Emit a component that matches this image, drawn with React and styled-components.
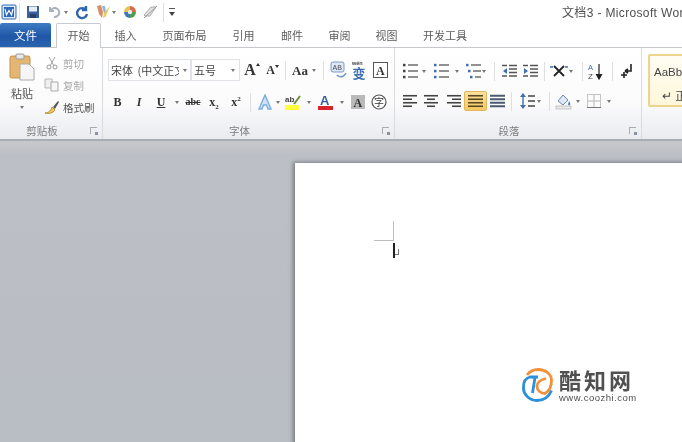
import React from "react";
import styled, { createGlobalStyle } from "styled-components";

const Global = createGlobalStyle`
  html, body { margin: 0; padding: 0; background: #babdc3; }
  #root { width: 682px; height: 442px; overflow: hidden; }
`;

const Window = styled.div`
  width: 682px;
  height: 442px;
  display: flex;
  flex-direction: column;
  overflow: hidden;
  background: #fff;
  font-family: "Noto Sans CJK SC", "Liberation Sans", sans-serif;
  color: #555;
  filter: blur(0.4px);
`;

const TitleBar = styled.div`
  height: 24px;
  flex: none;
  display: flex;
  align-items: center;
  background: #fff;
  white-space: nowrap;
`;

const QuickSlot = styled.div`
  width: ${p => p.$w}px;
  height: 24px;
  flex: none;
  display: flex;
  align-items: center;
  justify-content: center;
  svg { flex: none; }
`;

const DocTitle = styled.div`
  margin-left: auto;
  width: 120px;
  flex: none;
  overflow: hidden;
  padding-bottom: 1px;
  font-size: 12px;
  letter-spacing: 0.35px;
  color: #4e4e4e;
  font-family: "Liberation Sans", "Noto Sans CJK SC", sans-serif;
`;

const TabBar = styled.div`
  height: 24px;
  flex: none;
  display: flex;
  align-items: stretch;
  background: #fff;
  border-bottom: 1px solid #c5c8cd;
  box-sizing: border-box;
`;

const FileTab = styled.div`
  width: 51px;
  flex: none;
  margin: -1px 5px 0 0;
  display: flex;
  align-items: center;
  justify-content: center;
  color: #fff;
  font-size: 11.5px;
  border-radius: 2px 2px 0 0;
  background: linear-gradient(#3f7cc4, #1f57a6 55%, #2a63b0);
`;

const Tab = styled.div`
  width: ${p => p.$w}px;
  flex: none;
  display: flex;
  align-items: center;
  justify-content: center;
  font-size: 11px;
  color: #5c5c5c;
  padding-bottom: 2px;
  box-sizing: border-box;
  ${p => p.$active && `
    background: #fff;
    border: 1px solid #c8ccd2;
    border-bottom: none;
    border-radius: 2px 2px 0 0;
    height: 25px;
    margin-top: -1px;
  `}
`;

const Ribbon = styled.div`
  height: 93px;
  flex: none;
  display: flex;
  box-sizing: border-box;
  background: linear-gradient(#ffffff, #fbfbfc 60%, #e9ebef);
  border-bottom: 2px solid #a8acb3;
`;

const Group = styled.div`
  width: ${p => p.$w}px;
  flex: none;
  display: flex;
  flex-direction: column;
  box-sizing: border-box;
  border-right: 1px solid #d9dbdf;
  position: relative;
`;

const GroupBody = styled.div`
  height: 74px;
  flex: none;
  box-sizing: border-box;
  padding-top: ${p => p.$top || 0}px;
`;

const GroupLabel = styled.div`
  height: 17px;
  display: flex;
  align-items: center;
  justify-content: center;
  padding-right: 18px;
  font-size: 10.5px;
  color: #7c7c7c;
`;

const Launcher = styled.div`
  position: absolute;
  right: 5px;
  bottom: 5px;
  width: 6px;
  height: 6px;
  border-left: 1px solid #aaa;
  border-top: 1px solid #aaa;
  &::after {
    content: "";
    position: absolute;
    right: -1px;
    bottom: -1px;
    width: 3px;
    height: 3px;
    background: #8a93a3;
  }
`;

const ClipBody = styled(GroupBody)`
  display: flex;
`;

const PasteColumn = styled.div`
  width: 44px;
  flex: none;
  display: flex;
  flex-direction: column;
  align-items: center;
  padding-top: 5px;
  font-size: 11px;
  color: #555;
`;

const PasteLabel = styled.div`
  margin: 5px 0 -3px;
  line-height: 14px;
`;

const ClipColumn = styled.div`
  flex: 1;
  padding-top: 5px;
  display: flex;
  flex-direction: column;
  gap: 2px;
`;

const ClipRow = styled.div`
  height: 20px;
  display: flex;
  align-items: center;
  gap: 3px;
  font-size: 10.5px;
  color: ${p => (p.$dim ? "#a9a9a9" : "#555")};
  white-space: nowrap;
  svg { width: 16px; flex: none; }
`;

const Row = styled.div`
  display: flex;
  align-items: center;
  height: 22px;
  margin-left: ${p => p.$left || 0}px;
  margin-bottom: ${p => p.$gap || 0}px;
`;

const Cell = styled.div`
  width: ${p => p.$w}px;
  height: 20px;
  flex: none;
  margin-left: ${p => p.$ml || 0}px;
  display: flex;
  align-items: center;
  justify-content: center;
  box-sizing: border-box;
  svg { flex: none; }
  ${p => p.$active && `
    background: linear-gradient(#fbe3a0, #f6c862);
    border: 1px solid #e2b659;
    border-radius: 2px;
  `}
`;

const Divider = styled.div`
  width: 1px;
  height: 19px;
  flex: none;
  margin: 0 ${p => p.$r ?? p.$m ?? 5}px 0 ${p => p.$m ?? 5}px;
  background: #dcdee2;
`;

const Arrow = styled.div`
  width: ${p => p.$w || 9}px;
  height: 20px;
  flex: none;
  margin-left: ${p => p.$ml || 0}px;
  display: flex;
  align-items: center;
  justify-content: center;
  &::before {
    content: "";
    flex: none;
    border-left: 2.5px solid transparent;
    border-right: 2.5px solid transparent;
    border-top: 3px solid #777;
  }
`;

const Combo = styled.div`
  width: ${p => p.$w}px;
  height: 22px;
  flex: none;
  box-sizing: border-box;
  display: flex;
  align-items: center;
  padding-left: 2px;
  background: #fff;
  border: 1px solid #dfe2e6;
  margin-right: ${p => p.$mr || 0}px;
  font-size: 11px;
  color: #444;
`;

const ComboText = styled.span`
  flex: 1;
  overflow: hidden;
  white-space: nowrap;
  word-spacing: 2px;
`;

const GlyphA = styled.span`
  font-family: "Liberation Serif", serif;
  font-weight: bold;
  font-size: ${p => p.$size || 13}px;
  color: ${p => p.$color || "#333"};
  font-style: ${p => (p.$italic ? "italic" : "normal")};
  text-decoration: ${p => p.$deco || "none"};
  line-height: 1;
`;

const RaisedA = styled(GlyphA)`
  position: relative;
  &::after {
    content: "";
    position: absolute;
    right: -4px;
    top: 1px;
    border-left: 2.5px solid transparent;
    border-right: 2.5px solid transparent;
    ${p => (p.$down ? "border-top: 3px solid #333;" : "border-bottom: 3px solid #333;")}
  }
`;

const Sub = styled.sub`
  font-size: 7px;
  line-height: 0;
`;

const Sup = styled.sup`
  font-size: 7px;
  line-height: 0;
`;

const StyleCard = styled.div`
  width: 50px;
  height: 53px;
  margin: 6px 0 0 6px;
  flex: none;
  box-sizing: border-box;
  border: 2px solid #eed58f;
  border-radius: 2px;
  background: linear-gradient(#fffdf3, #fff7db);
  padding: 9px 0 0 4px;
  font-size: 11.5px;
  line-height: 14px;
  color: #444;
  white-space: nowrap;
  font-family: "Liberation Sans", "Noto Sans CJK SC", sans-serif;
`;

const StyleSample = styled.div`
  margin: 10px 0 0 8px;
`;

const Workspace = styled.div`
  flex: 1;
  min-height: 0;
  position: relative;
  background: linear-gradient(#c6c8cc, #bcbfc5 14px, #b9bdc4);
  padding: 22px 0 0 295px;
`;

const Page = styled.div`
  width: 420px;
  height: 320px;
  box-sizing: border-box;
  background: #fff;
  box-shadow: -2px -1px 4px rgba(80, 80, 85, 0.6);
  padding: 58px 0 0 79px;
`;

const CropMark = styled.div`
  width: 20px;
  height: 20px;
  box-sizing: border-box;
  border-right: 1px solid #bdbdbd;
  border-bottom: 1px solid #bdbdbd;
`;

const Caret = styled.div`
  width: 2px;
  height: 15px;
  margin: 2px 0 0 19px;
  background: #222;
  position: relative;
  &::after {
    content: "";
    position: absolute;
    left: 2px;
    top: 6px;
    width: 3px;
    height: 5px;
    border-right: 1px solid #777;
    border-bottom: 1px solid #777;
  }
`;

const Watermark = styled.div`
  position: absolute;
  left: 522px;
  top: 225px;
  display: flex;
  align-items: center;
  gap: 6px;
`;

const BrandText = styled.div`
  display: flex;
  flex-direction: column;
  color: #505050;
  padding-top: 2px;
`;

const BrandName = styled.div`
  font-size: 22px;
  line-height: 23px;
  font-weight: 700;
  letter-spacing: 3px;
  margin-bottom: 2px;
`;

const BrandUrl = styled.div`
  font-size: 9.5px;
  line-height: 10px;
  letter-spacing: 0.5px;
  font-family: "Liberation Sans", sans-serif;
`;

// ---- drawings ----

const Svg = ({ w = 16, h = 16, children }) => (
  <svg width={w} height={h} viewBox={`0 0 ${w} ${h}`} fill="none">{children}</svg>
);

const WordIcon = () => (
  <Svg>
    <rect x="1" y="1" width="14" height="14" rx="1" fill="#dbe8f7" stroke="#2f6db5" />
    <rect x="3" y="3" width="10" height="10" fill="#2b67b4" />
    <path d="M4 5l1.5 6L8 6.5 10.5 11 12 5" stroke="#fff" strokeWidth="1.2" />
  </Svg>
);

const SaveIcon = () => (
  <Svg>
    <rect x="2" y="2" width="12" height="12" fill="#3a5f9e" />
    <rect x="4" y="2.5" width="8" height="5" fill="#e8eef6" />
    <rect x="5" y="10" width="6" height="4" fill="#2a3f66" />
  </Svg>
);

const UndoIcon = () => (
  <Svg>
    <path d="M4 3v4h4M4.5 7A4.5 4.5 0 1 1 8 13" stroke="#a9b0bb" strokeWidth="2" />
  </Svg>
);

const RedoIcon = () => (
  <Svg>
    <path d="M12 2v4H8M12 6a5 5 0 1 0 1 4" stroke="#2f67ae" strokeWidth="2.4" />
  </Svg>
);

const BrushIcon = () => (
  <Svg>
    <path d="M2 2l2 8 3 4 1-6-2-7z" fill="#d98c6a" />
    <path d="M7 2l2 7 1 5 1-6-1-6z" fill="#8cb4df" />
    <path d="M15 2L9 9l-1 5 3-2z" fill="#e5cf5c" />
  </Svg>
);

const WheelIcon = () => (
  <svg width="14" height="14" viewBox="0 0 14 14">
    <path d="M7 7V1a6 6 0 0 1 6 6z" fill="#d86a4a" />
    <path d="M7 7h6a6 6 0 0 1-6 6z" fill="#4ba04f" />
    <path d="M7 7v6a6 6 0 0 1-6-6z" fill="#3f78c0" />
    <path d="M7 7H1a6 6 0 0 1 6-6z" fill="#e3c54c" />
    <circle cx="7" cy="7" r="2.2" fill="#eee" />
  </svg>
);

const EraseIcon = () => (
  <Svg>
    <path d="M2 11l7-8h5l-6 9H3z" fill="#e4e4e4" stroke="#aaa" />
    <path d="M2 14L15 2" stroke="#999" />
  </Svg>
);

const CustomizeIcon = () => (
  <Svg w={8} h={10}>
    <path d="M1 1.5h6" stroke="#555" />
    <path d="M1 5h6L4 9z" fill="#444" />
  </Svg>
);

const PasteIcon = () => (
  <svg width="26" height="28" viewBox="0 0 26 28" fill="none">
    <rect x="1" y="3" width="20" height="22" rx="2" fill="#e5b66f" stroke="#c2914c" />
    <rect x="7" y="1" width="8" height="5" rx="1" fill="#e8e8e8" stroke="#999" />
    <path d="M11 11h9l5 5v11H11z" fill="#f6f6f6" stroke="#aaa" />
  </svg>
);

const ScissorsIcon = () => (
  <svg width="16" height="14" viewBox="-2 0 16 14" fill="none">
    <path d="M3 1l5 9M9 1L4 10" stroke="#a3a3a3" />
    <circle cx="3" cy="11" r="2" stroke="#9a9a9a" />
    <circle cx="9" cy="11" r="2" stroke="#9a9a9a" />
  </svg>
);

const CopyIcon = () => (
  <Svg w={16} h={14}>
    <path d="M1 1h7v9H1z" fill="#eee" stroke="#b5b5b5" />
    <path d="M7 4h7v9H7z" fill="#f6f6f6" stroke="#aaa" />
  </Svg>
);

const PainterIcon = () => (
  <Svg w={16} h={16}>
    <path d="M1 14c4 0 6-3 7-6l3 3c-2 3-6 4-10 3z" fill="#ecc660" stroke="#b98f2e" />
    <path d="M9 8l5-6 1 1-4 7z" fill="#555" />
  </Svg>
);

const AbcCheck = () => (
  <Svg w={18} h={18}>
    <rect x="1" y="1" width="13" height="10" rx="2" fill="#dfe9f5" stroke="#7a9bc4" />
    <text x="2.5" y="9" fontSize="7" fill="#445" fontFamily="Liberation Sans">AB</text>
    <path d="M7 14c3 3 7 2 9-2" stroke="#6f97c9" strokeWidth="1.6" />
  </Svg>
);

const PhoneticIcon = () => (
  <svg width="18" height="20" viewBox="0 0 18 20">
    <text x="2" y="5" fontSize="5.500" fontWeight="bold" fill="#444" fontFamily="Liberation Sans">wén</text>
    <text x="2.500" y="18" fontSize="13" fontWeight="bold" fill="#3f6fb0" fontFamily="Noto Sans CJK SC">变</text>
  </svg>
);

const BoxA = () => (
  <svg width="15" height="16" viewBox="0 0 15 16">
    <rect x=".5" y=".5" width="14" height="15" fill="#fff" stroke="#555" />
    <text x="3" y="13" fontSize="12" fontWeight="bold" fill="#333" fontFamily="Liberation Serif">A</text>
  </svg>
);

const GlowA = () => (
  <svg width="16" height="16" viewBox="0 0 16 16">
    <path d="M8 1L2 15h3l1.500-4h3l1.500 4h3z" fill="#cfe2f6" stroke="#78aee0" strokeWidth="1.4" />
  </svg>
);

const HighlightIcon = () => (
  <svg width="18" height="18" viewBox="0 0 18 18">
    <text x="1" y="9" fontSize="8" fontWeight="bold" fill="#444" fontFamily="Liberation Sans">ab</text>
    <path d="M10 11l6-8" stroke="#6d8f3a" strokeWidth="2" />
    <rect x="1" y="12" width="14" height="5" fill="#ffff3c" />
  </svg>
);

const ColorA = () => (
  <svg width="16" height="17" viewBox="0 0 16 17">
    <text x="2" y="11" fontSize="13" fontWeight="bold" fill="#3a5f9e" fontFamily="Liberation Sans">A</text>
    <rect x="0" y="12" width="15" height="4" fill="#d8232a" />
  </svg>
);

const ShadedA = () => (
  <svg width="14" height="14" viewBox="0 0 14 14">
    <rect width="14" height="14" fill="#b9b9b9" />
    <text x="2.5" y="11.5" fontSize="12" fontWeight="bold" fill="#333" fontFamily="Liberation Serif">A</text>
  </svg>
);

const CircleChar = () => (
  <svg width="16" height="16" viewBox="0 0 16 16">
    <circle cx="8" cy="8" r="7" stroke="#555" strokeWidth="1.2" fill="#fff" />
    <text x="3" y="12" fontSize="10" fill="#333" fontFamily="Noto Sans CJK SC">字</text>
  </svg>
);

const Lines = ({ rows, w = 15, h = 14, color = "#444", sw = 1.6 }) => (
  <svg width={w} height={h} viewBox={`0 0 ${w} ${h}`}>
    {rows.map(([x1, x2], i) => (
      <path key={i} d={`M${x1} ${(i + 0.5) * h / rows.length}H${x2}`} stroke={color} strokeWidth={sw} />
    ))}
  </svg>
);

const ListIcon = ({ marker = "#444", tiered }) => (
  <svg width="15" height="16" viewBox="0 0 15 16">
    {[2, 8, 14].map((y, i) => (
      <g key={y}>
        <rect x={tiered ? i * 2 : 0} y={y - 1.2} width="2.5" height="2.5" fill={marker} />
        <path d={`M${(tiered ? i * 2 : 0) + 5} ${y}H15`} stroke="#555" strokeWidth="1.3" />
      </g>
    ))}
  </svg>
);

const IndentIcon = ({ dir }) => (
  <svg width="15" height="14" viewBox="0 0 15 14">
    <path d="M7 1.5h8M7 5h8M7 8.5h8M7 12h8" stroke="#555" strokeWidth="1.3" />
    <path d={dir < 0 ? "M5 4L1 7l4 3z" : "M1 4l4 3-4 3z"} fill="#3f6fb0" />
    <path d="M0 1.5h5M0 12h5" stroke="#555" strokeWidth="1.3" />
  </svg>
);

const XIcon = () => (
  <svg width="18" height="14" viewBox="0 0 18 14">
    <path d="M4 2l10 10M14 2L4 12" stroke="#222" strokeWidth="1.8" />
    <path d="M0 3h3M15 3h3" stroke="#3f6fb0" strokeWidth="1.5" />
  </svg>
);

const SortIcon = () => (
  <svg width="16" height="17" viewBox="0 0 16 17">
    <text x="0" y="7" fontSize="7.5" fill="#3f6fb0" fontFamily="Liberation Sans">A</text>
    <text x="0" y="16" fontSize="8" fill="#444" fontFamily="Liberation Sans">Z</text>
    <path d="M11 1v14M8.5 11.5L11 16l2.500-4.500z" stroke="#222" strokeWidth="1.2" fill="#222" />
  </svg>
);

const PilcrowIcon = () => (
  <svg width="14" height="16" viewBox="0 0 14 16">
    <path d="M11 1v7H5M5 8l3-2M5 8l3 2" stroke="#222" strokeWidth="1.6" fill="none" />
    <path d="M4 9v6M1 12h6" stroke="#222" strokeWidth="1.6" />
  </svg>
);

const LineSpacing = () => (
  <svg width="15" height="18" viewBox="0 0 15 18">
    <path d="M3 3v12" stroke="#3f6fb0" strokeWidth="1.4" />
    <path d="M0 5l3-4 3 4zM0 13l3 4 3-4z" fill="#3f6fb0" />
    <path d="M8 4h7M8 9h7M8 14h7" stroke="#444" strokeWidth="1.5" />
  </svg>
);

const ShadingIcon = () => (
  <svg width="18" height="18" viewBox="0 0 18 18">
    <path d="M3 9l5-6 5 5-5 5z" fill="#dfe9f5" stroke="#6f88a8" />
    <path d="M14 9c1 2 2 3 1 4s-2 0-2-1z" fill="#4f86c6" />
    <rect x="1" y="14" width="15" height="3" fill="#e9e9e9" stroke="#aaa" strokeWidth=".6" />
  </svg>
);

const BorderIcon = () => (
  <svg width="14" height="14" viewBox="0 0 14 14">
    <rect x=".5" y=".5" width="13" height="13" fill="#fbfbfb" stroke="#c4c4c4" />
    <path d="M7 1v12M1 7h12" stroke="#b5b5b5" />
    <path d="M0 13.5h14" stroke="#777" />
  </svg>
);

const LogoMark = () => (
  <svg width="31" height="34" viewBox="0 0 31 34" fill="none">
    <path d="M1.500 19C1 26 7 32.500 15 32.500c7 0 12-4 14.500-10" stroke="#2c8fd8" strokeWidth="2.8" />
    <path d="M1.500 19C1.500 14 4 10 8 9h8M13 9.500L10.500 25" stroke="#2c8fd8" strokeWidth="2.8" />
    <path d="M5 7C8 3 12 1.500 16 1.500c8 0 13.500 5 13.500 11 0 6-3 11-6.500 13-4 0-8-3-8-7s4-7 9-8" stroke="#f0913a" strokeWidth="2.8" />
  </svg>
);

// ---- data ----

const TABS = [
  ["开始", 45, true],
  ["插入", 49],
  ["页面布局", 69],
  ["引用", 49],
  ["邮件", 48],
  ["审阅", 47],
  ["视图", 47],
  ["开发工具", 70],
];

const App = () => (
  <Window>
    <Global />
    <TitleBar>
      <QuickSlot $w={17}><WordIcon /></QuickSlot>
      <QuickSlot $w={4}><Divider $m={0} /></QuickSlot>
      <QuickSlot $w={24}><SaveIcon /></QuickSlot>
      <QuickSlot $w={18}><UndoIcon /></QuickSlot>
      <Arrow $w={6} />
      <QuickSlot $w={26}><RedoIcon /></QuickSlot>
      <QuickSlot $w={16}><BrushIcon /></QuickSlot>
      <Arrow $w={6} />
      <QuickSlot $w={25}><WheelIcon /></QuickSlot>
      <QuickSlot $w={16}><EraseIcon /></QuickSlot>
      <QuickSlot $w={11}><Divider $m={0} /></QuickSlot>
      <QuickSlot $w={6}><CustomizeIcon /></QuickSlot>
      <DocTitle>文档3 - Microsoft Word</DocTitle>
    </TitleBar>

    <TabBar>
      <FileTab>文件</FileTab>
      {TABS.map(([label, w, active]) => (
        <Tab key={label} $w={w} $active={active}>{label}</Tab>
      ))}
    </TabBar>

    <Ribbon>
      <Group $w={103}>
        <ClipBody>
          <PasteColumn>
            <PasteIcon />
            <PasteLabel>粘贴</PasteLabel>
            <Arrow $w={9} />
          </PasteColumn>
          <ClipColumn>
            <ClipRow $dim><ScissorsIcon />剪切</ClipRow>
            <ClipRow $dim><CopyIcon />复制</ClipRow>
            <ClipRow><PainterIcon />格式刷</ClipRow>
          </ClipColumn>
        </ClipBody>
        <GroupLabel>剪贴板</GroupLabel>
        <Launcher />
      </Group>

      <Group $w={292}>
        <GroupBody $top={11}>
          <Row $left={5} $gap={10}>
            <Combo $w={83}>
              <ComboText>宋体 (中文正文</ComboText>
              <Arrow $w={11} />
            </Combo>
            <Combo $w={49}>
              <ComboText>五号</ComboText>
              <Arrow $w={12} />
            </Combo>
            <Cell $w={20}><RaisedA $size={16}>A</RaisedA></Cell>
            <Cell $w={21}><RaisedA $size={12} $down>A</RaisedA></Cell>
            <Divider $m={4} />
            <Cell $w={20}><GlyphA $size={13}>Aa</GlyphA></Cell>
            <Arrow $w={8} />
            <Divider $m={5} />
            <Cell $w={19}><AbcCheck /></Cell>
            <Cell $w={22}><PhoneticIcon /></Cell>
            <Cell $w={21}><BoxA /></Cell>
          </Row>
          <Row $left={4}>
            <Cell $w={21}><GlyphA $size={12}>B</GlyphA></Cell>
            <Cell $w={22}><GlyphA $size={12} $italic>I</GlyphA></Cell>
            <Cell $w={22}><GlyphA $size={12} $deco="underline">U</GlyphA></Cell>
            <Arrow $w={10} />
            <Cell $w={22}><GlyphA $size={10} $deco="line-through">abc</GlyphA></Cell>
            <Cell $w={20}><GlyphA $size={12}>x<Sub>2</Sub></GlyphA></Cell>
            <Cell $w={24}><GlyphA $size={12}>x<Sup>2</Sup></GlyphA></Cell>
            <Divider $m={2} $r={6} />
            <Cell $w={16}><GlowA /></Cell>
            <Arrow $w={9} />
            <Cell $w={22}><HighlightIcon /></Cell>
            <Arrow $w={9} />
            <Cell $w={26}><ColorA /></Cell>
            <Arrow $w={5} />
            <Cell $w={28}><ShadedA /></Cell>
            <Cell $w={14}><CircleChar /></Cell>
          </Row>
        </GroupBody>
        <GroupLabel>字体</GroupLabel>
        <Launcher />
      </Group>

      <Group $w={247}>
        <GroupBody $top={12}>
          <Row $left={5} $gap={8}>
            <Cell $w={20}><ListIcon /></Cell>
            <Arrow $w={8} />
            <Cell $w={26}><ListIcon marker="#3f6fb0" /></Cell>
            <Arrow $w={6} />
            <Cell $ml={5} $w={16}><ListIcon tiered marker="#3f6fb0" /></Cell>
            <Arrow $w={6} />
            <Divider $m={7} />
            <Cell $w={14}><IndentIcon dir={-1} /></Cell>
            <Cell $ml={7} $w={14}><IndentIcon dir={1} /></Cell>
            <Divider $m={7} />
            <Cell $w={14}><XIcon /></Cell>
            <Arrow $w={10} />
            <Divider $m={6} />
            <Cell $w={14}><SortIcon /></Cell>
            <Divider $m={9} />
            <Cell $w={10}><PilcrowIcon /></Cell>
          </Row>
          <Row $left={5}>
            <Cell $w={20}><Lines rows={[[0, 14], [0, 9], [0, 14], [0, 9]]} /></Cell>
            <Cell $w={22}><Lines rows={[[0, 14], [3, 11], [0, 14], [3, 11]]} /></Cell>
            <Cell $w={22}><Lines rows={[[1, 15], [6, 15], [1, 15], [6, 15]]} /></Cell>
            <Cell $w={23} $active><Lines rows={[[0, 15], [0, 15], [0, 15], [0, 15]]} color="#5a4a20" /></Cell>
            <Cell $w={20}><Lines rows={[[0, 15], [0, 15], [0, 15], [0, 15]]} color="#4a5a70" sw={2} /></Cell>
            <Divider $m={4} />
            <Cell $ml={1} $w={20}><LineSpacing /></Cell>
            <Arrow $w={4} />
            <Divider $m={8} />
            <Cell $w={12}><ShadingIcon /></Cell>
            <Arrow $ml={4} $w={8} />
            <Cell $ml={5} $w={14}><BorderIcon /></Cell>
            <Arrow $ml={3} $w={9} />
          </Row>
        </GroupBody>
        <GroupLabel>段落</GroupLabel>
        <Launcher />
      </Group>

      <StyleCard>
        AaBbCcDd
        <StyleSample>↵ 正文</StyleSample>
      </StyleCard>
    </Ribbon>

    <Workspace>
      <Page>
        <CropMark />
        <Caret />
      </Page>
      <Watermark>
        <LogoMark />
        <BrandText>
          <BrandName>酷知网</BrandName>
          <BrandUrl>www.coozhi.com</BrandUrl>
        </BrandText>
      </Watermark>
    </Workspace>
  </Window>
);

export default App;
